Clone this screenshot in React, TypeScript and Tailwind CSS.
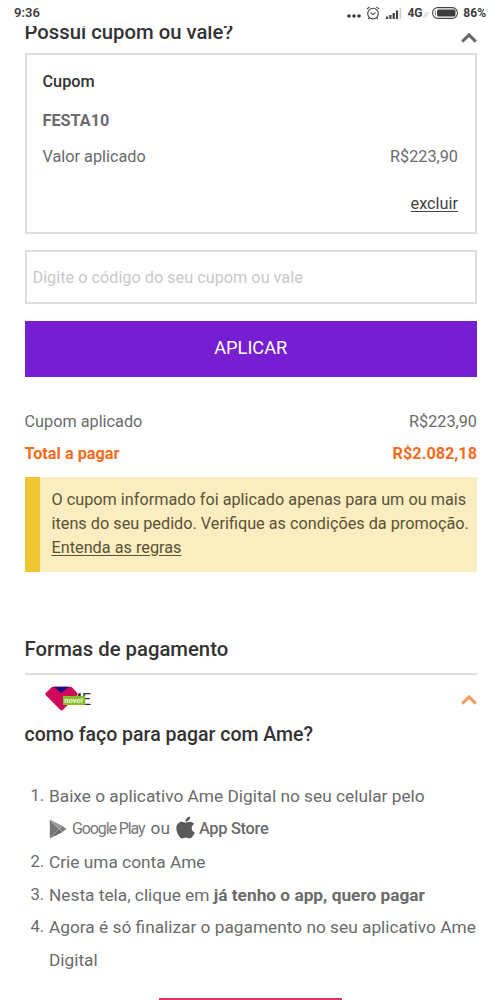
import type { ReactNode } from "react";
import { FaApple } from "react-icons/fa";

type ChevronProps = {
  className: string;
};

const ChevronUp = ({ className }: ChevronProps) => (
  <svg viewBox="0 0 16 10" className={className} fill="none" stroke="currentColor" strokeWidth="3">
    <path d="M1.2 8.6 8 1.9l6.8 6.7" />
  </svg>
);

const AlarmIcon = () => (
  <svg viewBox="0 0 14 14" className="h-3.5 w-3.5" fill="none" stroke="#444" strokeWidth="1.1">
    <circle cx="7" cy="7.6" r="5.3" />
    <path d="M4.6 6.6 7 8.6l2.5-2M.8 3.2 3.6.8M13.2 3.2 10.4.8M3.4 11.8l-1.2 1.4M10.6 11.8l1.2 1.4" />
  </svg>
);

const SignalIcon = () => (
  <svg viewBox="0 0 16 11" className="h-[11px] w-4">
    <path d="M0 8.5h2.2V11H0zM3.3 7h2.2v4H3.3zM6.6 5h2.2v6H6.6zM9.9 2.5h2.2V11H9.9z" fill="#444" />
    <path d="M13.6 0h1.6v11h-1.6z" fill="#ccc" />
  </svg>
);

const BatteryIcon = () => (
  <svg viewBox="0 0 26 12" className="h-3 w-[26px]">
    <rect x=".6" y=".6" width="24.8" height="10.8" rx="5.2" fill="none" stroke="#444" strokeWidth="1.1" />
    <rect x="5" y="2.6" width="18.5" height="6.8" rx="1.6" fill="#3c3c3c" />
    <path d="M3.4 3.6v4.8" stroke="#777" strokeWidth="1" />
  </svg>
);

const GooglePlayIcon = () => (
  <svg viewBox="0 0 18 20" className="h-5 w-[18px]">
    <path d="M.8.5v19L10 10z" fill="#77777a" />
    <path d="M.8.5 10 10l3.2-3.2z" fill="#98989b" />
    <path d="M.8 19.5 10 10l3.2 3.2z" fill="#68686b" />
    <path d="m13.2 6.8 4.2 3.2-4.2 3.2L10 10z" fill="#808083" />
    <path d="M1.4 1.2 10 10l-8.6 8.8M10 10l3-3M10 10l3 3" fill="none" stroke="#b4b4b6" strokeWidth=".5" />
  </svg>
);

const AmeLogo = () => (
  <svg viewBox="0 0 33 25" className="absolute left-0 top-0 h-[25px] w-[33px]">
    <path
      d="M8 .8h17.5q1 0 1.7.7L32.3 7c.6.7.5 1.3 0 1.9L18 23.8c-1 .9-2 .9-2.9 0L.9 9.2C.2 8.4.1 7.7.8 7l5.6-5.5Q7 .8 8 .8z"
      fill="#cf0a5c"
    />
    <path d="M8.8.8h15L16.3 7z" fill="#1d0a86" />
  </svg>
);

const StatusBar = () => (
  <header className="relative z-10 flex h-[26px] items-center justify-between bg-white px-[14px] text-[12px] font-bold text-[#3c3c3c]">
    <span className="text-[13px] font-semibold">9:36</span>
    <div className="flex items-center">
      <svg viewBox="0 0 14 4" className="mr-[5px] mt-[6px] h-1 w-3.5" fill="#3c3c3c">
        <circle cx="2" cy="2" r="1.8" />
        <circle cx="7" cy="2" r="1.8" />
        <circle cx="12" cy="2" r="1.8" />
      </svg>
      <AlarmIcon />
      <span className="ml-1.5">
        <SignalIcon />
      </span>
      <span className="ml-[5px]">4G</span>
      <span className="ml-px mt-1 text-[7px] font-normal italic text-[#aaa]">//</span>
      <span className="ml-1">
        <BatteryIcon />
      </span>
      <span className="ml-[5px]">86%</span>
    </div>
  </header>
);

type RowProps = {
  label: string;
  value: string;
  className?: string;
};

const Row = ({ label, value, className = "" }: RowProps) => (
  <div className={`flex items-center justify-between ${className}`}>
    <span>{label}</span>
    <span>{value}</span>
  </div>
);

const Step = ({ number, children }: { number: number; children: ReactNode }) => (
  <li className="flex">
    <span className="w-[24.5px] shrink-0 pl-1.5 text-[16.6px]">{number}.</span>
    <div className="whitespace-nowrap">{children}</div>
  </li>
);

export default function App() {
  return (
    <div className="h-[1000px] w-[500px] overflow-hidden bg-white font-['Roboto',sans-serif] text-[16.25px] text-[#6b6b6b]">
      <StatusBar />

      <main className="pl-[24.5px] pr-[23px]">
        <div className="-mt-[6px] flex h-[33px] items-start justify-between">
          <h2 className="text-[20.3px] font-medium leading-6 text-[#333]">Possui cupom ou vale?</h2>
          <ChevronUp className="mt-[13px] h-2.5 w-4 text-[#666]" />
        </div>

        <section className="h-[181px] border-2 border-[#dedede] pl-4 pr-[17px] pt-[15px]">
          <h3 className="font-medium leading-6 text-[#333]">Cupom</h3>
          <p className="mt-[15px] font-bold leading-6">FESTA10</p>
          <Row label="Valor aplicado" value="R$223,90" className="mt-3 leading-6" />
          <div className="mt-[23px] text-right leading-6">
            <a className="text-[#444] underline underline-offset-2">excluir</a>
          </div>
        </section>

        <input
          className="mt-4 block h-[54px] w-full border-2 border-[#dedede] px-1.5 placeholder:text-[#c8c8c8]"
          placeholder="Digite o código do seu cupom ou vale"
        />
        <button className="mt-[17px] block h-[56px] w-full bg-[#771ed2] pb-[3px] text-[18.2px] text-white">APLICAR</button>

        <Row label="Cupom aplicado" value="R$223,90" className="mt-[33px] leading-6" />
        <Row label="Total a pagar" value="R$2.082,18" className="mt-2 font-bold leading-6 text-[#f76b1c]" />

        <div className="mt-[11px] h-[95px] whitespace-nowrap border-l-[15.5px] border-[#f0c733] bg-[#faedc0] pl-3 pt-[11px] leading-6 text-[#5a5236]">
          O cupom informado foi aplicado apenas para um ou mais
          <br />
          itens do seu pedido. Verifique as condições da promoção.
          <br />
          <a className="underline underline-offset-2">Entenda as regras</a>
        </div>

        <h2 className="mt-[65px] text-[20.3px] font-medium leading-6 text-[#333]">Formas de pagamento</h2>
        <div className="mt-3 h-0.5 bg-[#dedede]" />

        <div className="mt-[11px] flex h-[26px] items-start justify-between pl-5">
          <div className="relative h-[25px] w-[46.5px] text-right text-[16px] leading-[27px] text-[#333]">
            AME
            <AmeLogo />
            <span className="absolute left-[18px] top-[10px] h-[9px] w-[22px] bg-[#86bc25] text-center text-[7.5px] font-medium leading-[9px] text-white">
              novo!
            </span>
          </div>
          <ChevronUp className="mt-[9px] h-2.5 w-4 text-[#f79a5f]" />
        </div>
        <h3 className="mt-[11px] text-[19.5px] font-medium leading-6 text-[#333]">como faço para pagar com Ame?</h3>

        <ol className="mt-[33px] text-[17.3px] leading-[32.8px]">
          <Step number={1}>
            Baixe o aplicativo Ame Digital no seu celular pelo
            <div className="flex h-[33px] items-center">
              <GooglePlayIcon />
              <span className="ml-[5px] text-[16px] tracking-[-1.1px] text-[#77777a]">Google Play</span>
              <span className="-mt-0.5 ml-1.5">ou</span>
              <FaApple className="-mt-1 ml-1.5 h-[25px] w-[19px] text-[#5a5a5c]" />
              <span className="ml-1 text-[16.4px] font-medium tracking-[-0.3px]">App Store</span>
            </div>
          </Step>
          <Step number={2}>Crie uma conta Ame</Step>
          <Step number={3}>
            Nesta tela, clique em <b>já tenho o app, quero pagar</b>
          </Step>
          <Step number={4}>
            Agora é só finalizar o pagamento no seu aplicativo Ame
            <br />
            Digital
          </Step>
        </ol>

        <button className="ml-[134px] mt-[21px] block h-14 w-[183px] bg-[#e0355f]" />
      </main>
    </div>
  );
}
